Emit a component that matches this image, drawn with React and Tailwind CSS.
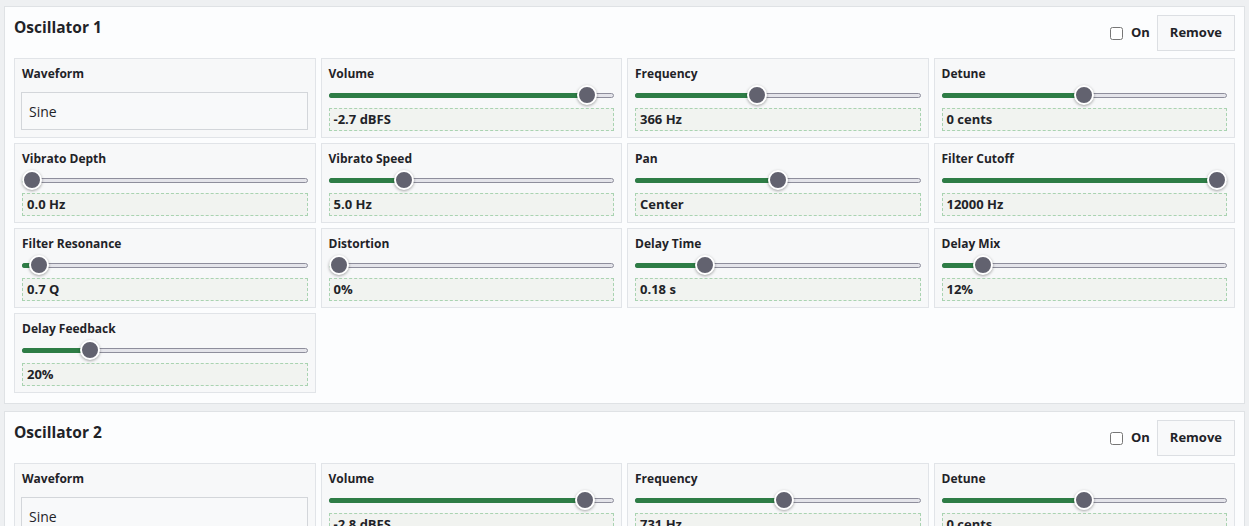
import React from 'react';

const font = { fontFamily: '"Open Sans", "Noto Sans", sans-serif' };

const oscillators = [
    {
        name: 'Oscillator 1',
        params: [
            { label: 'Volume', pos: 0.936, value: '-2.7 dBFS' },
            { label: 'Frequency', pos: 0.42, value: '366 Hz' },
            { label: 'Detune', pos: 0.5, value: '0 cents' },
            { label: 'Vibrato Depth', pos: 0, value: '0.0 Hz' },
            { label: 'Vibrato Speed', pos: 0.245, value: '5.0 Hz' },
            { label: 'Pan', pos: 0.5, value: 'Center' },
            { label: 'Filter Cutoff', pos: 1, value: '12000 Hz' },
            { label: 'Filter Resonance', pos: 0.026, value: '0.7 Q' },
            { label: 'Distortion', pos: 0, value: '0%' },
            { label: 'Delay Time', pos: 0.226, value: '0.18 s' },
            { label: 'Delay Mix', pos: 0.12, value: '12%' },
            { label: 'Delay Feedback', pos: 0.22, value: '20%' },
        ],
    },
    {
        name: 'Oscillator 2',
        params: [
            { label: 'Volume', pos: 0.93, value: '-2.8 dBFS' },
            { label: 'Frequency', pos: 0.525, value: '731 Hz' },
            { label: 'Detune', pos: 0.5, value: '0 cents' },
        ],
    },
];

// Range track with fill up to the thumb centre (thumb is 20px wide)
const Slider = ({ pos }) => (
    <div className="relative h-[20px] flex items-center">
        <div className="relative w-full h-[5px] rounded-full bg-[#e4e4ea] border border-[#8e8e9c]">
            <div
                className="absolute -left-px -top-px h-[5px] rounded-full bg-[#2e7d46]"
                style={{ width: `calc(10px + ${pos} * (100% - 20px))` }}
            />
        </div>
        <div
            className="absolute top-0 w-[20px] h-[20px] rounded-full bg-[#62626f] border-2 border-white shadow-[0_1px_3px_rgba(0,0,0,0.35)]"
            style={{ left: `calc(${pos} * (100% - 20px))` }}
        />
    </div>
);

const Cell = ({ label, children }) => (
    <div className="bg-[#f7f8f9] border border-[#e1e4e8] px-[7px] pt-[6px] pb-[6px] h-[80px]">
        <div className="text-[12px] font-bold leading-[18px] text-[#1f2328]">{label}</div>
        {children}
    </div>
);

const ParamCell = ({ label, pos, value }) => (
    <Cell label={label}>
        <div className="mt-[2px]">
            <Slider pos={pos} />
        </div>
        <div className="mt-[3px] h-[23px] border border-dashed border-[#a9d3b1] bg-[#f1f3f0] px-[4px] flex items-center text-[13px] font-bold text-[#1f2328]">
            {value}
        </div>
    </Cell>
);

const Oscillator = ({ osc }) => (
    <div className="bg-[#fcfdfe] border border-[#dfe2e5] px-[9px] pt-[8px] pb-[10px]">
        <div className="flex items-start justify-between">
            <h2 className="text-[15.5px] font-bold leading-[25px] text-[#1f2328]">{osc.name}</h2>
            <div className="flex items-center gap-[7px]">
                <label className="flex items-center gap-[8px] text-[13px] font-bold text-[#1f2328]">
                    <input type="checkbox" className="w-[13px] h-[13px] m-0" />
                    On
                </label>
                <button className="h-[36px] px-[12px] bg-[#f8f9fa] border border-[#dcdfe3] text-[13px] font-bold text-[#1f2328]">
                    Remove
                </button>
            </div>
        </div>
        <div className="mt-[7px] grid grid-cols-4 gap-[5px]">
            <Cell label="Waveform">
                <div className="mt-[9px] h-[38px] border border-[#d3d6da] bg-[#f8f9fa] flex items-center px-[7px] -ml-px text-[14px] text-[#1f2328]">
                    Sine
                </div>
            </Cell>
            {osc.params.map((p) => (
                <ParamCell key={p.label} {...p} />
            ))}
        </div>
    </div>
);

export default function App() {
    return (
        <div className="min-h-screen bg-[#eef0f2] px-[4px] pt-[6px] flex flex-col gap-[7px]" style={font}>
            {oscillators.map((osc) => (
                <Oscillator key={osc.name} osc={osc} />
            ))}
        </div>
    );
}
